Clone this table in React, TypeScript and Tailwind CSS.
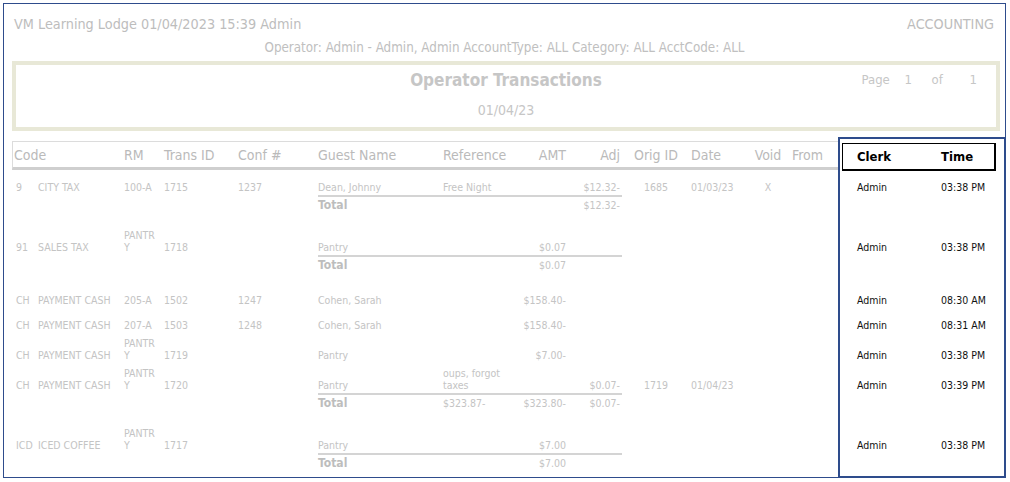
import React from 'react';

const GRID =
  'grid grid-cols-[24px_86px_40px_74px_80px_125px_79px_48px_54px_68px_60px_36px_52px_98px_64px] items-end text-[10.5px] leading-[12px] text-[#c4c4c4]';

type Row = {
  mt: string;
  num: string;
  desc: string;
  rm: React.ReactNode;
  trans: string;
  conf?: string;
  guest: string;
  refc?: React.ReactNode;
  amt?: string;
  adj?: string;
  orig?: string;
  date?: string;
  vd?: string;
  time: string;
};

const Pantry = (
  <>
    PANTR
    <br />Y
  </>
);

function DataRow({ r }: { r: Row }) {
  return (
    <div className={`${GRID} ${r.mt}`}>
      <div className="pl-[4px]">{r.num}</div>
      <div className="pl-[2px]">{r.desc}</div>
      <div className="pl-[2px]">{r.rm}</div>
      <div className="pl-[2px]">{r.trans}</div>
      <div className="pl-[2px]">{r.conf}</div>
      <div className="pl-[2px]">{r.guest}</div>
      <div className="pl-[2px]">{r.refc}</div>
      <div className="pr-[2px] text-right">{r.amt}</div>
      <div className="pr-[2px] text-right">{r.adj}</div>
      <div className="text-center">{r.orig}</div>
      <div className="pl-[1px]">{r.date}</div>
      <div className="text-center">{r.vd}</div>
      <div />
      <div className="pl-[19px] text-[#111]">Admin</div>
      <div className="pl-[5px] text-[#111]">{r.time}</div>
    </div>
  );
}

function TotalRow({ refc, amt, adj }: { refc?: string; amt?: string; adj?: string }) {
  return (
    <div className="flex mt-[2px]">
      <div className="w-[306px]" />
      <div className="w-[304px] h-[18px] border-t-2 border-[#d4d4d4] grid grid-cols-[123px_79px_48px_54px] items-center text-[10.5px] leading-[12px] text-[#c4c4c4]">
        <div className="font-bold text-[12px] text-[#bdbdbd]">Total</div>
        <div className="pl-[2px]">{refc}</div>
        <div className="pr-[2px] text-right">{amt}</div>
        <div className="pr-[2px] text-right">{adj}</div>
      </div>
    </div>
  );
}

export default function App() {
  return (
    <div className="w-[1010px] h-[482px] bg-white pt-[3px] pl-[3px] font-['DejaVu_Sans_Condensed','DejaVu_Sans',sans-serif] font-stretch-semi-condensed">
      <div className="relative w-[1003px] h-[475px] border border-[#2e4c8c]">
        {/* title row */}
        <div className="flex justify-between pt-[12px] pl-[10px] pr-[11px] text-[14.3px] leading-[16px] text-[#bdbdbd]">
          <span>VM Learning Lodge 01/04/2023 15:39 Admin</span>
          <span>ACCOUNTING</span>
        </div>
        <div className="mt-[9px] text-center text-[13.3px] leading-[14px] text-[#c0c0c0]">
          Operator: Admin - Admin, Admin AccountType: ALL Category: ALL AcctCode: ALL
        </div>

        {/* beige box */}
        <div className="mt-[6px] ml-[8px] w-[988px] h-[70px] border-4 border-[#e8e8d7]">
          <div className="grid grid-cols-[1fr_auto_1fr] pt-[5px] items-center">
            <div />
            <div className="font-bold text-[17px] leading-[20px] text-[#c6c6c6]">Operator Transactions</div>
            <div className="flex justify-end pr-[19px] text-[13px] leading-[20px] text-[#c6c6c6]">
              <span className="w-[43px]">Page</span>
              <span className="w-[27px]">1</span>
              <span className="w-[38px]">of</span>
              <span>1</span>
            </div>
          </div>
          <div className="mt-[12px] text-center text-[14px] leading-[16px] text-[#c6c6c6]">01/04/23</div>
        </div>

        {/* table */}
        <div className="ml-[8px] mt-[10px]">
          <div className="flex h-[29px]">
            <div className="w-[826px] h-[29px] border-t border-l border-b-[3px] border-t-[#dcdcdc] border-l-[#dcdcdc] border-b-[#cfcfcf] grid grid-cols-[109px_40px_74px_80px_125px_79px_48px_54px_68px_60px_36px_52px] items-center text-[14px] leading-[16px] text-[#bababa]">
              <div className="pl-[1px]">Code</div>
              <div className="pl-[2px]">RM</div>
              <div className="pl-[2px]">Trans ID</div>
              <div className="pl-[2px]">Conf #</div>
              <div className="pl-[2px]">Guest Name</div>
              <div className="pl-[2px]">Reference</div>
              <div className="pr-[2px] text-right">AMT</div>
              <div className="pr-[2px] text-right">Adj</div>
              <div className="text-center">Orig ID</div>
              <div className="pl-[1px]">Date</div>
              <div className="text-center">Void</div>
              <div className="pl-[6px]">From</div>
            </div>
            <div className="ml-[4px] mt-[2px] w-[154px] h-[28px] border border-r-2 border-b-2 border-black grid grid-cols-[98px_1fr] items-center font-bold text-[13px] leading-[16px] text-black">
              <div className="pl-[14px]">Clerk</div>
              <div>Time</div>
            </div>
          </div>

          <DataRow
            r={{ mt: 'mt-[11px]', num: '9', desc: 'CITY TAX', rm: '100-A', trans: '1715', conf: '1237', guest: 'Dean, Johnny', refc: 'Free Night', adj: '$12.32-', orig: '1685', date: '01/03/23', vd: 'X', time: '03:38 PM' }}
          />
          <TotalRow adj="$12.32-" />

          <DataRow
            r={{ mt: 'mt-[16px]', num: '91', desc: 'SALES TAX', rm: Pantry, trans: '1718', guest: 'Pantry', amt: '$0.07', time: '03:38 PM' }}
          />
          <TotalRow amt="$0.07" />

          <DataRow
            r={{ mt: 'mt-[21px]', num: 'CH', desc: 'PAYMENT CASH', rm: '205-A', trans: '1502', conf: '1247', guest: 'Cohen, Sarah', amt: '$158.40-', time: '08:30 AM' }}
          />
          <DataRow
            r={{ mt: 'mt-[13px]', num: 'CH', desc: 'PAYMENT CASH', rm: '207-A', trans: '1503', conf: '1248', guest: 'Cohen, Sarah', amt: '$158.40-', time: '08:31 AM' }}
          />
          <DataRow
            r={{ mt: 'mt-[6px]', num: 'CH', desc: 'PAYMENT CASH', rm: Pantry, trans: '1719', guest: 'Pantry', amt: '$7.00-', time: '03:38 PM' }}
          />
          <DataRow
            r={{
              mt: 'mt-[6px]',
              num: 'CH',
              desc: 'PAYMENT CASH',
              rm: Pantry,
              trans: '1720',
              guest: 'Pantry',
              refc: (
                <>
                  oups, forgot
                  <br />
                  taxes
                </>
              ),
              adj: '$0.07-',
              orig: '1719',
              date: '01/04/23',
              time: '03:39 PM',
            }}
          />
          <TotalRow refc="$323.87-" amt="$323.80-" adj="$0.07-" />

          <DataRow
            r={{ mt: 'mt-[16px]', num: 'ICD', desc: 'ICED COFFEE', rm: Pantry, trans: '1717', guest: 'Pantry', amt: '$7.00', time: '03:38 PM' }}
          />
          <TotalRow amt="$7.00" />
        </div>

        {/* highlight overlay */}
        <div className="absolute left-[834px] top-[133px] w-[168px] h-[341px] border-2 border-[#2e4c8c] pointer-events-none" />
      </div>
    </div>
  );
}
